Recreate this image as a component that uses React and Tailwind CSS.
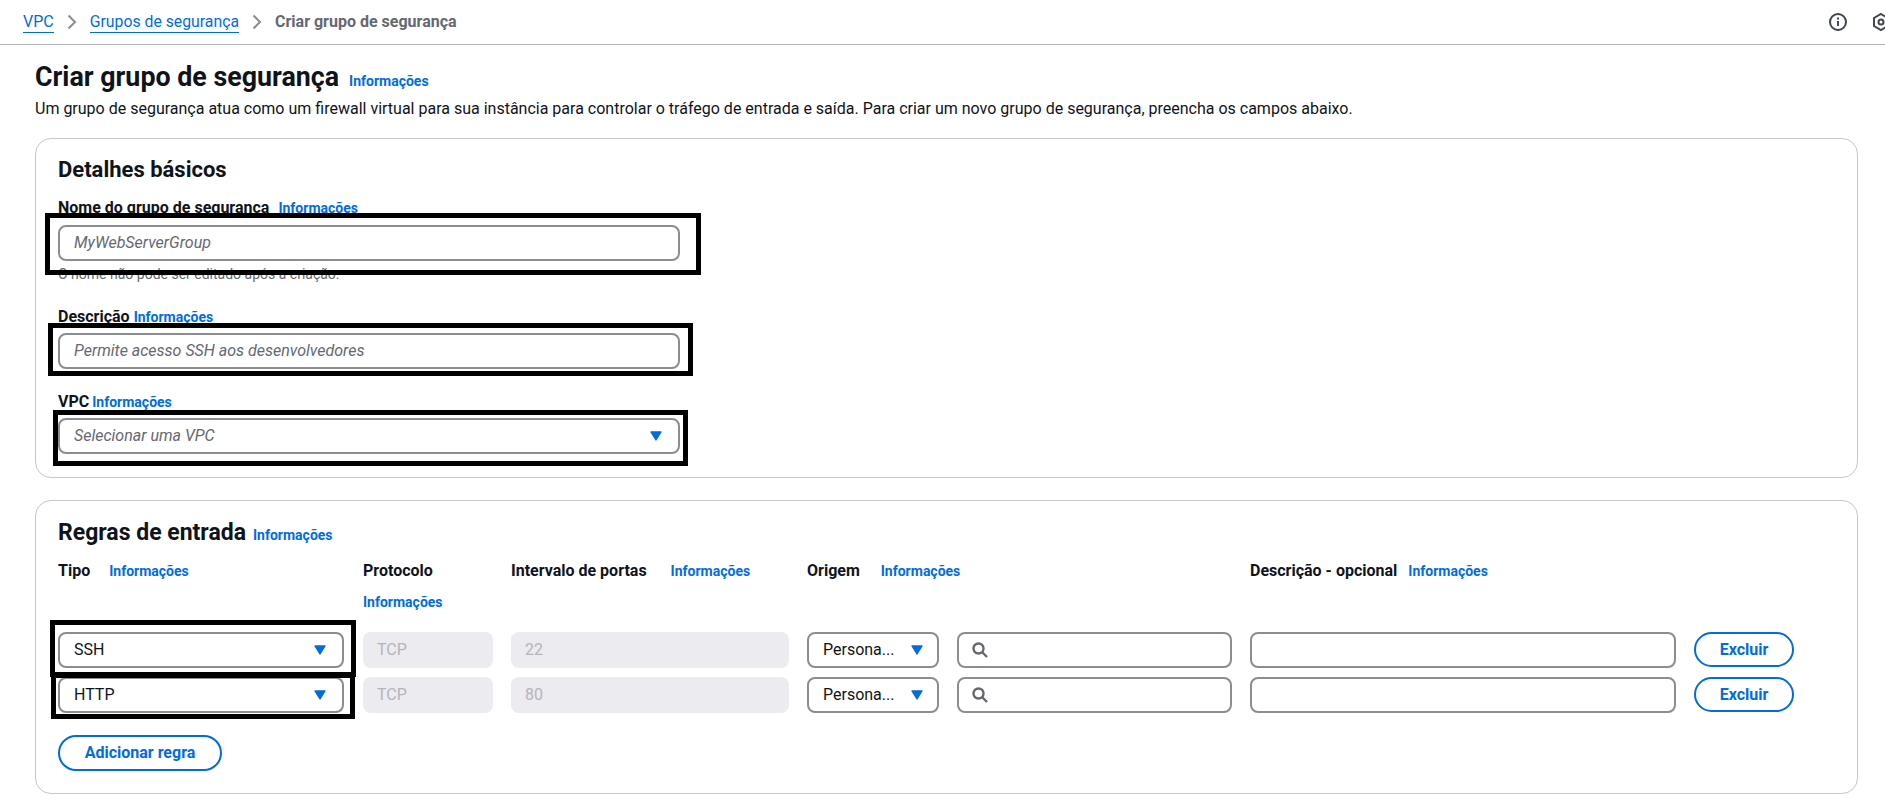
import React from "react";

function Info({ className = "" }) {
  return (
    <a className={`text-[14px] leading-5 font-bold text-[#006ce0] ${className}`}>
      Informações
    </a>
  );
}

function Caret({ className = "" }) {
  return (
    <svg width="12" height="10" viewBox="0 0 12 10" className={`shrink-0 ${className}`}>
      <path d="M1 1h10L6 9z" fill="#006ce0" stroke="#006ce0" strokeWidth="1.4" strokeLinejoin="round" />
    </svg>
  );
}

function SearchIcon() {
  return (
    <svg width="16" height="16" viewBox="0 0 16 16" fill="none" stroke="#656871" strokeWidth="2.400" className="shrink-0 -ml-[1px]">
      <circle cx="6.500" cy="6.500" r="5" />
      <path d="M10 10L15 15" />
    </svg>
  );
}

function Chevron() {
  return (
    <svg width="10" height="16" viewBox="0 0 10 16" fill="none" stroke="#8c8c94" strokeWidth="2" className="mx-[13px]">
      <path d="M1.500 1.500L8 8l-6.500 6.500" />
    </svg>
  );
}

// black annotation frame drawn over a field in the picture
function Frame({ className }) {
  return <div className={`absolute border-[5px] border-black pointer-events-none z-10 ${className}`} />;
}

function Field({ children, className = "" }) {
  return (
    <div className={`h-[36px] flex items-center border-2 border-[#8c8c94] rounded-lg bg-white px-[14px] ${className}`}>
      {children}
    </div>
  );
}

function RuleRow({ tipo, porta, frame }) {
  return (
    <>
      <div className="relative">
        <Field className="w-[286px] justify-between text-[16px] text-[#0f141a]">
          <span>{tipo}</span>
          <Caret className="mr-[2px]" />
        </Field>
        <Frame className={frame} />
      </div>
      <div className="h-[36px] flex items-center rounded-lg bg-[#ebebf0] px-[14px] text-[16px] text-[#b4b4bb]">TCP</div>
      <div className="h-[36px] flex items-center rounded-lg bg-[#ebebf0] px-[14px] text-[16px] text-[#b4b4bb]">{porta}</div>
      <div className="flex gap-[18px]">
        <Field className="w-[132px] shrink-0 justify-between text-[16px] text-[#0f141a]">
          <span>Persona...</span>
          <Caret />
        </Field>
        <Field className="flex-1 gap-2">
          <SearchIcon />
        </Field>
      </div>
      <Field />
      <button className="h-[35px] rounded-[20px] border-2 border-[#006ce0] text-[16px] font-bold text-[#006ce0]">
        Excluir
      </button>
    </>
  );
}

export default function App() {
  return (
    <div className="h-[812px] overflow-hidden bg-white font-['Roboto',sans-serif] text-[#0f141a]">
      <nav className="h-[45px] border-b border-[#b4b4bb] flex items-center justify-between pl-[23px]">
        <div className="flex items-center text-[16px]">
          <a className="text-[#006ce0] border-b border-[#006ce0] leading-5">VPC</a>
          <Chevron />
          <a className="text-[#006ce0] border-b border-[#006ce0] leading-5 text-[15.800px]">Grupos de segurança</a>
          <Chevron />
          <span className="font-bold text-[#656871] leading-5">Criar grupo de segurança</span>
        </div>
        <div className="flex items-center gap-[23px] w-[57px] overflow-hidden">
          <svg width="20" height="20" viewBox="0 0 20 20" fill="none" stroke="#414750" strokeWidth="2" className="shrink-0">
            <circle cx="10" cy="10" r="8" />
            <path d="M10 9v5M10 5.500v2" />
          </svg>
          <svg width="20" height="20" viewBox="0 0 20 20" fill="none" stroke="#414750" strokeWidth="2" className="shrink-0">
            <path d="M10 2l7 4v8l-7 4-7-4V6z" />
            <circle cx="10" cy="10" r="2.500" />
          </svg>
        </div>
      </nav>

      <div className="px-[35px] pt-[16px]">
        <div className="flex items-baseline gap-[10px]">
          <h1 className="text-[26.800px] leading-8 font-bold">Criar grupo de segurança</h1>
          <Info />
        </div>
        <p className="mt-[6px] text-[16px] leading-5">
          Um grupo de segurança atua como um firewall virtual para sua instância para controlar o tráfego de entrada e saída. Para criar um novo grupo de segurança, preencha os campos abaixo.
        </p>

        <section className="mt-[19px] w-[1823px] h-[340px] border border-[#c6c6cd] rounded-2xl px-[22px] pt-[17px]">
          <h2 className="text-[22px] leading-7 font-bold">Detalhes básicos</h2>

          <div className="mt-[14px] flex gap-[9px] items-center leading-5">
            <label className="text-[16px] font-bold">Nome do grupo de segurança</label>
            <Info />
          </div>
          <div className="relative w-[622px] mt-[7px]">
            <Field className="text-[16px] italic text-[#656871]">MyWebServerGroup</Field>
            <Frame className="-left-[13px] -right-[21px] -top-[12px] -bottom-[14px]" />
          </div>
          <p className="mt-[3px] text-[14px] leading-5 text-[#656871]">O nome não pode ser editado após a criação.</p>

          <div className="mt-[23px] flex gap-1 items-center leading-5">
            <label className="text-[16px] font-bold">Descrição</label>
            <Info />
          </div>
          <div className="relative w-[622px] mt-[6px]">
            <Field className="text-[16px] italic text-[#656871]">Permite acesso SSH aos desenvolvedores</Field>
            <Frame className="-left-[10px] -right-[13px] -top-[10px] -bottom-[7px]" />
          </div>

          <div className="mt-[23px] flex gap-[3px] items-center leading-5">
            <label className="text-[16px] font-bold">VPC</label>
            <Info />
          </div>
          <div className="relative w-[622px] mt-[6px]">
            <Field className="justify-between text-[16px] italic text-[#656871]">
              <span>Selecionar uma VPC</span>
              <Caret className="mr-[2px]" />
            </Field>
            <Frame className="-left-[5px] -right-[8px] -top-[8px] -bottom-[12px]" />
          </div>
        </section>

        <section className="mt-[22px] w-[1823px] h-[294px] border border-[#c6c6cd] rounded-2xl px-[22px] pt-[18px]">
          <div className="flex items-baseline gap-[7px]">
            <h2 className="text-[23px] leading-7 font-bold">Regras de entrada</h2>
            <Info />
          </div>

          <div className="mt-[14px] grid grid-cols-[287px_130px_278px_425px_426px_100px] gap-x-[18px] gap-y-[9px]">
            <div className="h-[62px] flex items-start gap-[19px] leading-5">
              <span className="text-[16px] font-bold">Tipo</span>
              <Info />
            </div>
            <div className="h-[62px] leading-5">
              <div className="text-[16px] font-bold">Protocolo</div>
              <Info className="block mt-[11px]" />
            </div>
            <div className="h-[62px] flex items-start gap-[24px] leading-5 whitespace-nowrap">
              <span className="text-[16px] font-bold">Intervalo de portas</span>
              <Info />
            </div>
            <div className="h-[62px] flex items-start gap-[21px] leading-5">
              <span className="text-[16px] font-bold">Origem</span>
              <Info />
            </div>
            <div className="h-[62px] flex items-start gap-[11px] leading-5">
              <span className="text-[16px] font-bold">Descrição - opcional</span>
              <Info />
            </div>
            <div />
            <RuleRow tipo="SSH" porta="22" frame="-left-[8px] -right-[11px] -top-[12px] -bottom-[9px]" />
            <RuleRow tipo="HTTP" porta="80" frame="-left-[7px] -right-[10px] -top-[4px] -bottom-[6px]" />
          </div>

          <button className="mt-[22px] w-[164px] h-[36px] rounded-[20px] border-2 border-[#006ce0] text-[16px] font-bold text-[#006ce0]">
            Adicionar regra
          </button>
        </section>
      </div>
    </div>
  );
}
